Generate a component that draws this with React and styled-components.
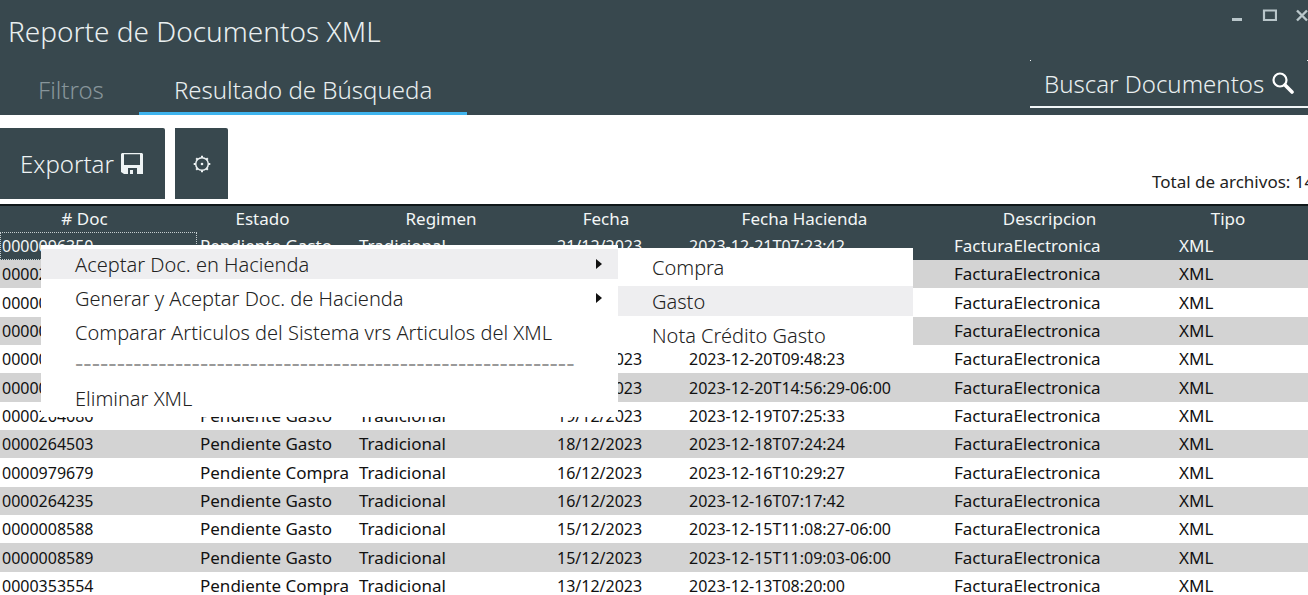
import React from 'react';
import styled, { createGlobalStyle } from 'styled-components';

const GlobalStyle = createGlobalStyle`
* {
box-sizing: border-box;
}
body {
margin: 0;
background: #ffffff;
font-family: "Noto Sans", "Open Sans", sans-serif;
overflow: hidden;
}
button {
font-family: inherit;
border: 0;
padding: 0;
}
`

const Window = styled.div`
display: flex;
flex-direction: column;
height: 100vh;
overflow: hidden;
white-space: nowrap;
`

const Header = styled.header`
display: flex;
flex-shrink: 0;
justify-content: space-between;
background: #38484e;
color: #e9eff0;
`

const HeaderLeft = styled.div`
display: flex;
flex-direction: column;
`

const HeaderRight = styled.div`
display: flex;
flex-direction: column;
justify-content: space-between;
align-items: flex-end;
padding-bottom: 7px;
`

const Title = styled.h1`
margin: 0;
padding: 12px 8px 0;
font-weight: 300;
font-size: 28px;
line-height: 38px;
`

const Tabs = styled.nav`
display: flex;
padding: 17px 0 0 3px;
`

const Tab = styled.button`
padding: 0 35px;
background: none;
font-weight: 300;
font-size: 24px;
line-height: 45px;
color: ${props => props.$active ? '#e9eff0' : '#87959a'};
border-bottom: 3px solid ${props => props.$active ? '#3fb4ee' : 'transparent'};
`

const WindowButtons = styled.div`
display: flex;
gap: 18px;
padding-top: 8px;
margin-right: -2px;
`

const WindowButton = styled.button`
display: flex;
width: 15px;
height: 15px;
background: none;
color: #b9c6ca;
`

const SearchButton = styled.button`
position: relative;
display: flex;
align-items: center;
gap: 8px;
width: 278px;
height: 48px;
padding-left: 14px;
background: none;
border-bottom: 2px solid #f1f6f7;
font-weight: 300;
font-size: 24px;
color: #e9eff0;
&::before, &::after {
content: "";
position: absolute;
top: 0;
left: 0;
width: 1px;
height: 1px;
background: #f1f6f7;
}
&::after {
left: auto;
right: 0;
}
`

const Toolbar = styled.div`
display: flex;
flex-shrink: 0;
align-items: flex-start;
gap: 10px;
padding-top: 13px;
height: 89px;
`

const ToolButton = styled.button`
display: flex;
align-items: center;
justify-content: center;
gap: 7px;
width: ${props => props.$wide ? '165px' : '53px'};
height: 71px;
padding-right: ${props => props.$wide ? '2px' : '0'};
background: #38484e;
border-radius: 0 2px 0 0;
font-weight: 300;
font-size: 24px;
color: #eef3f4;
`

const Total = styled.div`
width: 156px;
margin-left: auto;
align-self: flex-end;
font-size: 17px;
line-height: 24px;
padding-bottom: 10px;
color: #222222;
`

const Content = styled.main`
position: relative;
`

const Table = styled.table`
width: 100%;
table-layout: fixed;
border-collapse: collapse;
border-top: 2px solid #10181a;
font-size: 17px;
line-height: 20px;
color: #111111;
`

const Th = styled.th`
width: ${props => props.$width}px;
height: 27px;
padding: 0 28px 0 0;
background: #38484e;
color: #f3f6f6;
font-weight: 400;
text-align: center;
`

const Row = styled.tr`
height: 28px;
background: #ffffff;
&:nth-child(3n) {
height: 29px;
}
&:nth-child(even) {
background: #d3d3d3;
}
&:first-child {
background: #38484e;
color: #f3f6f6;
}
&:first-child td:first-child {
outline: 1px dotted #c5cdcf;
outline-offset: -1px;
}
`

const Td = styled.td`
padding: 0 0 0 3px;
font-size: ${props => props.$numeric ? '16px' : '17px'};
&:first-child {
padding-left: 2px;
}
`

const Menu = styled.ul`
position: absolute;
top: 41px;
left: 41px;
width: 577px;
margin: 0;
padding: 4px 0;
list-style: none;
display: flex;
flex-direction: column;
gap: 4px;
background: #ffffff;
`

const SubMenu = styled(Menu)`
top: 3px;
left: 577px;
width: 295px;
padding-bottom: 0;
`

const MenuItem = styled.button`
display: flex;
align-items: center;
justify-content: space-between;
width: 100%;
height: 30px;
padding: 0 16px 0 34px;
background: ${props => props.$active ? '#eeeef0' : 'none'};
font-size: 20px;
font-weight: 300;
color: #222222;
`

const Separator = styled.li`
height: 28px;
padding-left: 34px;
font-family: "Liberation Sans", Arial, sans-serif;
font-size: 25px;
line-height: 24px;
color: #999999;
`

const columns = [
    { name: '# Doc', width: 197 },
    { name: 'Estado', width: 159 },
    { name: 'Regimen', width: 198 },
    { name: 'Fecha', width: 132 },
    { name: 'Fecha Hacienda', width: 265 },
    { name: 'Descripcion', width: 225 },
    { name: 'Tipo', width: 132 },
];

const docs = [
    ['0000096350', 'Gasto', '21/12/2023', '2023-12-21T07:23:42'],
    ['0000264920', 'Gasto', '21/12/2023', '2023-12-21T07:20:15'],
    ['0000008612', 'Gasto', '20/12/2023', '2023-12-20T15:02:10'],
    ['0000008611', 'Gasto', '20/12/2023', '2023-12-20T14:58:41'],
    ['0000096211', 'Gasto', '20/12/2023', '2023-12-20T09:48:23'],
    ['0000008610', 'Gasto', '20/12/2023', '2023-12-20T14:56:29-06:00'],
    ['0000264686', 'Gasto', '19/12/2023', '2023-12-19T07:25:33'],
    ['0000264503', 'Gasto', '18/12/2023', '2023-12-18T07:24:24'],
    ['0000979679', 'Compra', '16/12/2023', '2023-12-16T10:29:27'],
    ['0000264235', 'Gasto', '16/12/2023', '2023-12-16T07:17:42'],
    ['0000008588', 'Gasto', '15/12/2023', '2023-12-15T11:08:27-06:00'],
    ['0000008589', 'Gasto', '15/12/2023', '2023-12-15T11:09:03-06:00'],
    ['0000353554', 'Compra', '13/12/2023', '2023-12-13T08:20:00'],
];

const Arrow = () => (
    <svg width="6" height="10" viewBox="0 0 6 10"><path d="M0 0L6 5L0 10Z" fill="#111111" /></svg>
);

const SaveIcon = () => (
    <svg width="22" height="22" viewBox="0 0 22 22">
        <path fillRule="evenodd" fill="currentColor" d="M1 0H21L22 1V21H3L0 19V1ZM3 1.2V12H19V1.2ZM7 15V21H9V17H12V21H16V15Z" />
    </svg>
);

const GearIcon = () => (
    <svg width="18" height="18" viewBox="0 0 18 18" fill="none" stroke="currentColor" strokeWidth="1.5">
        <circle cx="9" cy="9" r="6.3" />
        <circle cx="9" cy="9" r="1.3" fill="currentColor" stroke="none" />
        <path strokeWidth="2" d="M9 2.5V.7M9 15.5V17.3M2.5 9H.7M15.5 9H17.3M4.5 4.5L3.2 3.2M13.5 4.5L14.8 3.2M4.5 13.5L3.2 14.8M13.5 13.5L14.8 14.8" />
    </svg>
);

const SearchIcon = () => (
    <svg width="22" height="22" viewBox="0 0 22 22" fill="none" stroke="#ffffff">
        <circle cx="8" cy="8" r="6.5" strokeWidth="2.2" />
        <path d="M13 13L20 20" strokeWidth="3.6" strokeLinecap="round" />
    </svg>
);

const App = () => {
    return (
        <Window>
            <GlobalStyle />
            <Header>
                <HeaderLeft>
                    <Title>Reporte de Documentos XML</Title>
                    <Tabs>
                        <Tab>Filtros</Tab>
                        <Tab $active>Resultado de Búsqueda</Tab>
                    </Tabs>
                </HeaderLeft>
                <HeaderRight>
                    <WindowButtons>
                        <WindowButton aria-label="Minimizar">
                            <svg width="15" height="15" viewBox="0 0 15 15"><path d="M3 10H13V13H3Z" fill="currentColor" /></svg>
                        </WindowButton>
                        <WindowButton aria-label="Maximizar">
                            <svg width="15" height="15" viewBox="0 0 15 15"><path d="M2 2.5H14V12H2Z" fill="none" stroke="currentColor" strokeWidth="2.2" /></svg>
                        </WindowButton>
                        <WindowButton aria-label="Cerrar">
                            <svg width="15" height="15" viewBox="0 0 15 15"><path d="M2 2.5L12 12.5M12 2.5L2 12.5" fill="none" stroke="currentColor" strokeWidth="2.4" /></svg>
                        </WindowButton>
                    </WindowButtons>
                    <SearchButton>Buscar Documentos <SearchIcon /></SearchButton>
                </HeaderRight>
            </Header>

            <Toolbar>
                <ToolButton $wide>Exportar <SaveIcon /></ToolButton>
                <ToolButton aria-label="Opciones"><GearIcon /></ToolButton>
                <Total>Total de archivos: 14</Total>
            </Toolbar>

            <Content>
                <Table>
                    <thead>
                        <tr>
                            {columns.map(col => <Th key={col.name} $width={col.width}>{col.name}</Th>)}
                        </tr>
                    </thead>
                    <tbody>
                        {docs.map(([doc, tipo, fecha, hacienda]) => (
                            <Row key={doc}>
                                <Td $numeric>{doc}</Td>
                                <Td>Pendiente {tipo}</Td>
                                <Td>Tradicional</Td>
                                <Td $numeric>{fecha}</Td>
                                <Td $numeric>{hacienda}</Td>
                                <Td>FacturaElectronica</Td>
                                <Td>XML</Td>
                            </Row>
                        ))}
                    </tbody>
                </Table>

                <Menu>
                    <li>
                        <MenuItem $active>Aceptar Doc. en Hacienda <Arrow /></MenuItem>
                        <SubMenu>
                            <li><MenuItem>Compra</MenuItem></li>
                            <li><MenuItem $active>Gasto</MenuItem></li>
                            <li><MenuItem>Nota Crédito Gasto</MenuItem></li>
                        </SubMenu>
                    </li>
                    <li><MenuItem>Generar y Aceptar Doc. de Hacienda <Arrow /></MenuItem></li>
                    <li><MenuItem>Comparar Articulos del Sistema vrs Articulos del XML</MenuItem></li>
                    <Separator>{'-'.repeat(60)}</Separator>
                    <li><MenuItem>Eliminar XML</MenuItem></li>
                </Menu>
            </Content>
        </Window>
    );
};

export default App;
